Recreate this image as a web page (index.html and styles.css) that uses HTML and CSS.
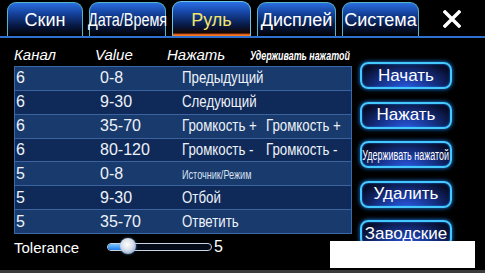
FILE: index.html
```html
<!DOCTYPE html>
<html lang="ru">
<head>
<meta charset="utf-8">
<title>Руль</title>
<link rel="stylesheet" href="styles.css">
</head>
<body>
<div class="screen">
  <div class="tabs">
    <div class="tab w76">Скин</div>
    <div class="tab w77"><span class="squeeze">Дата/Время</span></div>
    <div class="tab active w79">Руль</div>
    <div class="tab w79">Дисплей</div>
    <div class="tab w77">Система</div>
    <div class="close">
      <svg width="18" height="18" viewBox="0 0 18 18"><path d="M2 2 L16 16 M16 2 L2 16" stroke="#fff" stroke-width="3.4" stroke-linecap="square" fill="none"/></svg>
    </div>
  </div>
  <div class="content">
    <div class="left">
      <div class="head">
        <span class="h1">Канал</span>
        <span class="h2">Value</span>
        <span class="h3">Нажать</span>
        <span class="h4"><span class="cond-b">Удерживать нажатой</span></span>
      </div>
      <div class="table">
        <div class="row"><span class="c1">6</span><span class="c2">0-8</span><span class="c3"><span class="nar">Предыдущий</span></span><span class="c4"></span></div>
        <div class="row"><span class="c1">6</span><span class="c2">9-30</span><span class="c3"><span class="nar">Следующий</span></span><span class="c4"></span></div>
        <div class="row"><span class="c1">6</span><span class="c2">35-70</span><span class="c3"><span class="nar">Громкость +</span></span><span class="c4"><span class="nar">Громкость +</span></span></div>
        <div class="row"><span class="c1">6</span><span class="c2">80-120</span><span class="c3"><span class="nar">Громкость -</span></span><span class="c4"><span class="nar">Громкость -</span></span></div>
        <div class="row"><span class="c1">5</span><span class="c2">0-8</span><span class="c3"><span class="cond-s">Источник/Режим</span></span><span class="c4"></span></div>
        <div class="row"><span class="c1">5</span><span class="c2">9-30</span><span class="c3"><span class="nar">Отбой</span></span><span class="c4"></span></div>
        <div class="row"><span class="c1">5</span><span class="c2">35-70</span><span class="c3"><span class="nar">Ответить</span></span><span class="c4"></span></div>
      </div>
      <div class="tol">
        <span class="tol-label">Tolerance</span>
        <div class="slider">
          <div class="fill"></div>
          <div class="knob"></div>
        </div>
        <span class="tol-val">5</span>
      </div>
    </div>
    <div class="right">
      <div class="btn">Начать</div>
      <div class="btn">Нажать</div>
      <div class="btn"><span class="cond-btn">Удерживать нажатой</span></div>
      <div class="btn">Удалить</div>
      <div class="btn">Заводские</div>
    </div>
  </div>
  <div class="blank"></div>
  <div class="bottom-strip"></div>
</div>
</body>
</html>
```
FILE: styles.css
```css
html, body {
  margin: 0;
  padding: 0;
  background: #000;
}
body {
  font-family: "Liberation Sans", Arial, sans-serif;
  color: #fff;
}
.screen {
  position: relative;
  width: 485px;
  height: 273px;
  overflow: hidden;
  background: #000;
  display: flex;
  flex-direction: column;
}
.tabs {
  display: flex;
  align-items: flex-end;
  gap: 6px;
  height: 36px;
  padding-left: 7px;
  border-bottom: 2px solid #2f6fd0;
  box-sizing: content-box;
}
.tab {
  flex-shrink: 0;
  height: 34px;
  box-sizing: border-box;
  border: 1.5px solid #56b6c8;
  border-bottom: none;
  border-radius: 9px 9px 0 0;
  background: linear-gradient(to bottom, #2a6ee0 0%, #1544a0 30%, #071740 70%, #000 100%);
  display: flex;
  align-items: center;
  justify-content: center;
  font-size: 18px;
  color: #fff;
  white-space: nowrap;
  padding-top: 2px;
}
.squeeze {
  display: inline-block;
  transform: scaleX(0.8);
}
.w76 { width: 76px; }
.w77 { width: 77px; }
.w79 { width: 79px; }
.tab.active {
  height: 35px;
  border-color: #6cc6e0;
  color: #f4e46a;
  background: linear-gradient(to bottom, #2a70e6 0%, #1746a6 30%, #071740 70%, #120600 91%, #d8581a 95%, #ff8a20 100%);
}
.close {
  margin-left: auto;
  margin-right: 24px;
  align-self: center;
  display: flex;
  padding-top: 2px;
}
.content {
  display: flex;
  padding-left: 14px;
}
.left {
  width: 338px;
  flex-shrink: 0;
  display: flex;
  flex-direction: column;
}
.head {
  height: 28px;
  display: flex;
  align-items: center;
  padding-top: 4px;
  box-sizing: border-box;
  font-style: italic;
  font-size: 15px;
  color: #fff;
}
.h1 { width: 81px; flex-shrink: 0; }
.h2 { width: 72px; flex-shrink: 0; }
.h3 { width: 83px; flex-shrink: 0; }
.h4 { flex: 1; min-width: 0; white-space: nowrap; }
.cond-b {
  display: inline-block;
  font-weight: bold;
  font-size: 12px;
  transform: scaleX(0.74);
  transform-origin: left center;
}
.table {
  border: 1px solid #3b68a6;
  display: flex;
  flex-direction: column;
  box-sizing: border-box;
  height: 168px;
}
.row {
  height: 24px;
  display: flex;
  align-items: center;
  font-size: 16px;
  color: #eef2fa;
  border-bottom: 1px solid #3a63a0;
  box-sizing: border-box;
  background: #183a6c;
}
.row:nth-child(even) {
  background: #0f2a58;
}
.row:last-child {
  border-bottom: none;
  height: 23px;
}
.c1 { width: 84px; flex-shrink: 0; padding-left: 1px; box-sizing: border-box; }
.c2 { width: 83px; flex-shrink: 0; padding-left: 1px; box-sizing: border-box; }
.c3 { width: 84px; flex-shrink: 0; white-space: nowrap; }
.c4 { flex: 1; min-width: 0; white-space: nowrap; }
.nar {
  display: inline-block;
  transform: scaleX(0.83);
  transform-origin: left center;
}
.cond-s {
  display: inline-block;
  font-size: 13px;
  transform: scaleX(0.7);
  transform-origin: left center;
  color: #d8e2f2;
}
.tol {
  height: 26px;
  display: flex;
  align-items: center;
  font-size: 15px;
}
.tol-label {
  width: 93px;
  flex-shrink: 0;
}
.slider {
  position: relative;
  width: 105px;
  height: 8px;
  border: 1.5px solid #c8d4e4;
  border-radius: 6px;
  background: #050a18;
  box-sizing: border-box;
}
.fill {
  width: 22px;
  height: 100%;
  border-radius: 5px 0 0 5px;
  background: linear-gradient(to bottom, #7cc8ff, #1e7ae8);
}
.knob {
  position: absolute;
  left: 12px;
  top: -6px;
  width: 16px;
  height: 16px;
  border-radius: 50%;
  background: radial-gradient(circle at 45% 40%, #ffffff 0%, #d8dde8 45%, #8aa8d0 80%, #4a88d8 100%);
  box-shadow: 0 0 2px #5ab0ff;
}
.tol-val {
  margin-left: 2px;
  font-size: 16px;
}
.right {
  margin-left: 8px;
  width: 92px;
  padding-top: 24px;
  display: flex;
  flex-direction: column;
  gap: 12.5px;
}
.btn {
  height: 27px;
  box-sizing: border-box;
  border: 2px solid #44c8ff;
  border-radius: 8px;
  box-shadow: 0 0 4px #1a8cff, inset 0 0 2px #1a8cff;
  background: radial-gradient(ellipse at 50% 110%, #2a58e0 0%, #16328a 45%, #070c28 85%);
  display: flex;
  align-items: center;
  justify-content: center;
  font-size: 17px;
  color: #fff;
  white-space: nowrap;
  overflow: hidden;
}
.cond-btn {
  display: inline-block;
  font-size: 14px;
  transform: scaleX(0.64);
}
.blank {
  position: absolute;
  left: 330px;
  top: 241px;
  width: 145px;
  height: 27px;
  background: #fff;
}
.bottom-strip {
  position: absolute;
  left: 0;
  bottom: 0;
  width: 100%;
  height: 3px;
  background: #3c3c3c;
}
```
